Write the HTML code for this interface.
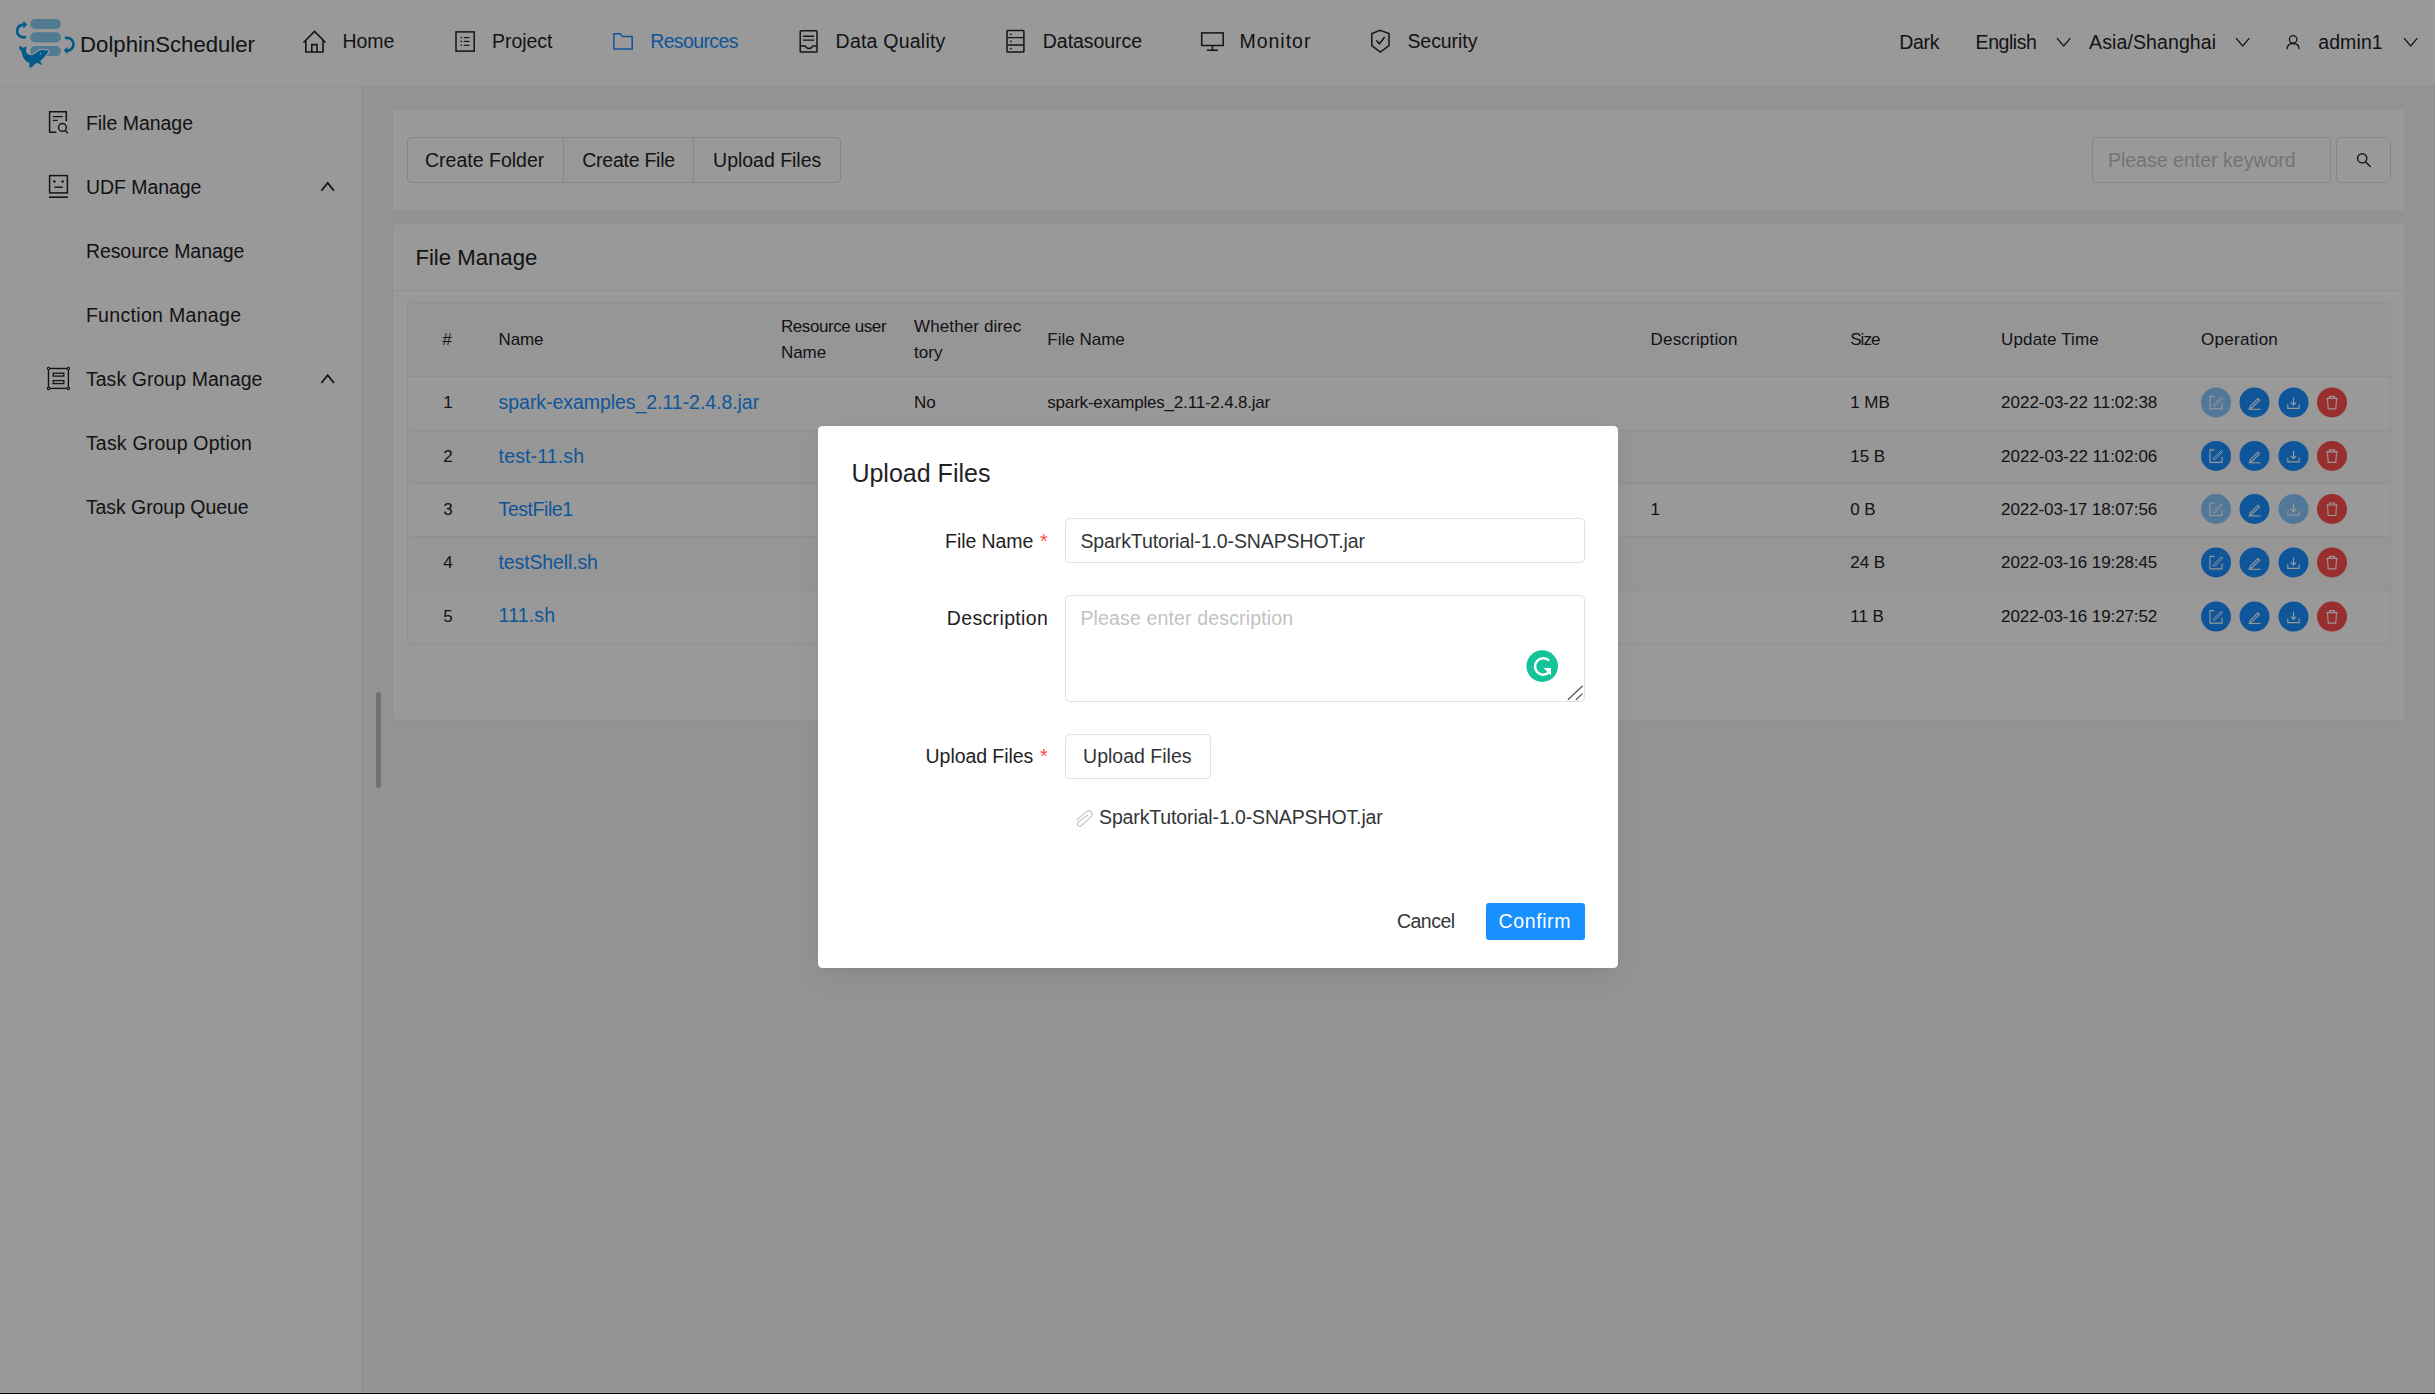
<!DOCTYPE html>
<html><head><meta charset="utf-8"><title>DolphinScheduler</title>
<style>
html,body{margin:0;padding:0;}
body{width:2435px;height:1394px;overflow:hidden;position:relative;background:#f6f6f9;font-family:'Liberation Sans', sans-serif;}
.t{position:absolute;white-space:nowrap;}
.b{position:absolute;box-sizing:border-box;}
svg.b{overflow:visible;}
</style></head><body>

<div class="b" style="left:0.00px;top:0.00px;width:2435.00px;height:86.00px;background:#fff;"></div>
<div class="b" style="left:0.00px;top:86.00px;width:2435.00px;height:1.30px;background:#efeff5;"></div>
<div class="b" style="left:0.00px;top:87.00px;width:361.00px;height:1307.00px;background:#fff;"></div>
<div class="b" style="left:361.00px;top:87.00px;width:1.50px;height:1307.00px;background:#efeff5;"></div>
<svg class="b" style="left:10px;top:12px;" width="70" height="60" viewBox="10 12 70 60">
<rect x="30.2" y="19" width="30.8" height="10" rx="5" fill="#85cdf6"/>
<rect x="30.2" y="32.3" width="30.8" height="10.2" rx="5" fill="#85cdf6"/>
<rect x="30.2" y="46" width="30.8" height="10.1" rx="5" fill="#85cdf6"/>
<path d="M25 37.2 A6.4 6.4 0 1 1 23.8 24.6" fill="none" stroke="#0098e6" stroke-width="2.7" stroke-linecap="round"/>
<path d="M23.3 21 L27.3 24.6 L23.3 28.4 Z" fill="#0098e6"/>
<path d="M66 37.9 A6.4 6.4 0 1 1 66.8 50.6" fill="none" stroke="#0098e6" stroke-width="2.7" stroke-linecap="round"/>
<path d="M67.6 46.8 L63.7 50.6 L67.6 54 Z" fill="#0098e6"/>
<clipPath id="b3"><rect x="30.2" y="46" width="30.8" height="10.1" rx="5"/></clipPath><path d="M19.1 46.1 L23.4 47.7 L26.6 46.2 L26 51 C26.3 53 27.8 54.8 30.1 55.1 C31.3 55.2 32.3 55 33.3 54.7 C35 54 37.5 51.8 39.7 50.6 C41 49.9 42.5 49.8 43.8 50.2 L45.1 50.6 C46 50.4 46.7 50 47.3 50.2 C48 50.4 48.5 50.6 48.4 51 C48.3 52 47.8 52.6 47.3 53.2 C46.5 54.3 44 57.5 42.5 59 C41.6 60 40.6 60.8 39.7 61.4 C40.8 62 41.8 63 41.8 64.8 C40.6 64.6 39.2 63.9 38.2 62.9 C37.2 63 36.3 63.1 35.4 63.2 C34.5 64.9 32.3 67 30.1 67.7 L29.1 67.6 C29.2 66.2 29.5 64.6 29.6 63.4 L28.8 62.7 C27 61.9 25.6 60.9 24.7 59.6 C23.5 58 22.8 56.7 22.5 55.3 C22 53.8 21.6 52.5 21.4 51 C20.6 50.2 19.9 49.6 19.3 48.9 Z" fill="none" stroke="#fff" stroke-width="2.6" clip-path="url(#b3)"/><path d="M19.1 46.1 L23.4 47.7 L26.6 46.2 L26 51 C26.3 53 27.8 54.8 30.1 55.1 C31.3 55.2 32.3 55 33.3 54.7 C35 54 37.5 51.8 39.7 50.6 C41 49.9 42.5 49.8 43.8 50.2 L45.1 50.6 C46 50.4 46.7 50 47.3 50.2 C48 50.4 48.5 50.6 48.4 51 C48.3 52 47.8 52.6 47.3 53.2 C46.5 54.3 44 57.5 42.5 59 C41.6 60 40.6 60.8 39.7 61.4 C40.8 62 41.8 63 41.8 64.8 C40.6 64.6 39.2 63.9 38.2 62.9 C37.2 63 36.3 63.1 35.4 63.2 C34.5 64.9 32.3 67 30.1 67.7 L29.1 67.6 C29.2 66.2 29.5 64.6 29.6 63.4 L28.8 62.7 C27 61.9 25.6 60.9 24.7 59.6 C23.5 58 22.8 56.7 22.5 55.3 C22 53.8 21.6 52.5 21.4 51 C20.6 50.2 19.9 49.6 19.3 48.9 Z" fill="#0098e6"/>
<circle cx="40.5" cy="53.5" r="0.75" fill="#fff"/>
</svg>
<div class="t" style="left:80.10px;top:30.82px;font-size:22.17px;line-height:27px;color:#222;">DolphinScheduler</div>
<svg class="b" style="left:0px;top:0px;" width="2435" height="86" viewBox="0 0 2435 86"><path d="M303.5 42.5 L314.5 31.5 L325.5 42.5 M305.8 40.5 V52 H323 V40.5 M311.8 52 V44.6 H317 V52" fill="none" stroke="#1f2225" stroke-width="1.6" stroke-linejoin="miter"/><rect x="456" y="31.9" width="18.2" height="19.2" fill="none" stroke="#1f2225" stroke-width="1.5"/><circle cx="461.2" cy="37.6" r="0.8" fill="#1f2225"/><path d="M463.8 37.6 H469.5" stroke="#1f2225" stroke-width="1.2"/><circle cx="461.2" cy="41.4" r="0.8" fill="#1f2225"/><path d="M463.8 41.4 H469.5" stroke="#1f2225" stroke-width="1.2"/><circle cx="461.2" cy="45.3" r="0.8" fill="#1f2225"/><path d="M463.8 45.3 H469.5" stroke="#1f2225" stroke-width="1.2"/><path d="M613.9 33.8 H620 L622.5 36.6 H632.2 V48.9 H613.9 Z" fill="none" stroke="#1890ff" stroke-width="1.5"/><rect x="800.2" y="30.7" width="16.8" height="21.3" rx="0.8" fill="none" stroke="#1f2225" stroke-width="1.5"/><path d="M803 36.2 H814 M803 40.1 H814" stroke="#1f2225" stroke-width="1.4"/><path d="M800.2 46 H805 Q809 51 813 46 H817" fill="none" stroke="#1f2225" stroke-width="1.4"/><rect x="1007" y="30.6" width="16.9" height="21.5" rx="0.8" fill="none" stroke="#1f2225" stroke-width="1.5"/><path d="M1007 37.6 H1023.9 M1007 45 H1023.9" stroke="#1f2225" stroke-width="1.4"/><circle cx="1010.8" cy="34.3" r="0.9" fill="#1f2225"/><circle cx="1010.8" cy="41.4" r="0.9" fill="#1f2225"/><circle cx="1010.8" cy="48.6" r="0.9" fill="#1f2225"/><rect x="1201.7" y="32.9" width="21.5" height="12.6" fill="none" stroke="#1f2225" stroke-width="1.5"/><path d="M1212.4 45.5 V50 M1206.9 50.3 H1218" stroke="#1f2225" stroke-width="1.5"/><path d="M1380.3 30.4 L1389 33.6 V45.6 L1380.3 52 L1371.8 45.6 V33.6 Z" fill="none" stroke="#1f2225" stroke-width="1.5" stroke-linejoin="miter"/><path d="M1376.3 40.5 L1379.5 43.8 L1384.6 37" fill="none" stroke="#1f2225" stroke-width="1.5"/><circle cx="2293.1" cy="39.4" r="3.7" fill="none" stroke="#1f2225" stroke-width="1.3"/><path d="M2286.9 49.3 C2287.2 45.5 2289.8 43.5 2293.1 43.5 C2296.4 43.5 2299 45.5 2299.2 49.3" fill="none" stroke="#1f2225" stroke-width="1.3"/><path d="M2057 38.2 L2063.7 46 L2070.4 38.2" fill="none" stroke="#1f2225" stroke-width="1.3"/><path d="M2236 38.2 L2242.7 46 L2249.4 38.2" fill="none" stroke="#1f2225" stroke-width="1.3"/><path d="M2404 38.2 L2410.7 46 L2417.4 38.2" fill="none" stroke="#1f2225" stroke-width="1.3"/></svg>
<div class="t" style="left:342.40px;top:29.74px;font-size:19.5px;line-height:23px;color:#1f2225;letter-spacing:-0.022px;">Home</div>
<div class="t" style="left:492.10px;top:29.74px;font-size:19.5px;line-height:23px;color:#1f2225;letter-spacing:-0.058px;">Project</div>
<div class="t" style="left:650.20px;top:29.74px;font-size:19.5px;line-height:23px;color:#1890ff;letter-spacing:-0.626px;">Resources</div>
<div class="t" style="left:835.60px;top:29.74px;font-size:19.5px;line-height:23px;color:#1f2225;letter-spacing:0.223px;">Data Quality</div>
<div class="t" style="left:1042.80px;top:29.74px;font-size:19.5px;line-height:23px;color:#1f2225;letter-spacing:-0.049px;">Datasource</div>
<div class="t" style="left:1239.40px;top:29.74px;font-size:19.5px;line-height:23px;color:#1f2225;letter-spacing:0.995px;">Monitor</div>
<div class="t" style="left:1407.40px;top:29.74px;font-size:19.5px;line-height:23px;color:#1f2225;letter-spacing:-0.056px;">Security</div>
<div class="t" style="left:1899.30px;top:30.74px;font-size:19.5px;line-height:23px;color:#1f2225;letter-spacing:-0.347px;">Dark</div>
<div class="t" style="left:1975.60px;top:30.74px;font-size:19.5px;line-height:23px;color:#1f2225;letter-spacing:-0.46px;">English</div>
<div class="t" style="left:2089.10px;top:30.74px;font-size:19.5px;line-height:23px;color:#1f2225;letter-spacing:0.102px;">Asia/Shanghai</div>
<div class="t" style="left:2318.20px;top:30.74px;font-size:19.5px;line-height:23px;color:#1f2225;letter-spacing:0.108px;">admin1</div>
<svg class="b" style="left:0px;top:87px;" width="361" height="400" viewBox="0 87 361 400"><path d="M56.3 132.3 H49.6 V111.7 H66.3 V121.3" fill="none" stroke="#1f2225" stroke-width="1.5"/><path d="M52.8 116.6 H62.8 M52.8 120.4 H57.7" stroke="#1f2225" stroke-width="1.3"/><circle cx="62.4" cy="127.4" r="3.9" fill="none" stroke="#1f2225" stroke-width="1.4"/><path d="M65.2 130.3 L67.8 133.2" stroke="#1f2225" stroke-width="1.4"/><rect x="49.6" y="175.6" width="17.8" height="17.3" fill="none" stroke="#1f2225" stroke-width="1.5"/><circle cx="54.4" cy="181.5" r="1.2" fill="#1f2225"/><circle cx="62.6" cy="181.5" r="1.2" fill="#1f2225"/><path d="M54.3 187.2 H62.8" stroke="#1f2225" stroke-width="1.4"/><path d="M49 197.2 H68" stroke="#1f2225" stroke-width="1.6"/><rect x="48.5" y="368.5" width="19.9" height="19.9" fill="none" stroke="#1f2225" stroke-width="1.4"/><circle cx="48.5" cy="368.5" r="1.2" fill="#fff" stroke="#1f2225" stroke-width="1.1"/><circle cx="68.4" cy="368.5" r="1.2" fill="#fff" stroke="#1f2225" stroke-width="1.1"/><circle cx="48.5" cy="388.4" r="1.2" fill="#fff" stroke="#1f2225" stroke-width="1.1"/><circle cx="68.4" cy="388.4" r="1.2" fill="#fff" stroke="#1f2225" stroke-width="1.1"/><rect x="53.2" y="373.2" width="10.6" height="2.9" fill="none" stroke="#1f2225" stroke-width="1.3"/><rect x="53.2" y="380.6" width="10.6" height="3" fill="none" stroke="#1f2225" stroke-width="1.3"/><path d="M321.4 190.7 L327.7 182.89999999999998 L334 190.7" fill="none" stroke="#1f2225" stroke-width="1.8"/><path d="M321.4 383 L327.7 375.2 L334 383" fill="none" stroke="#1f2225" stroke-width="1.8"/></svg>
<div class="t" style="left:85.90px;top:111.74px;font-size:19.5px;line-height:23px;color:#1f2225;letter-spacing:-0.015px;">File Manage</div>
<div class="t" style="left:85.90px;top:175.74px;font-size:19.5px;line-height:23px;color:#1f2225;letter-spacing:-0.047px;">UDF Manage</div>
<div class="t" style="left:85.90px;top:239.74px;font-size:19.5px;line-height:23px;color:#1f2225;letter-spacing:-0.065px;">Resource Manage</div>
<div class="t" style="left:85.90px;top:303.74px;font-size:19.5px;line-height:23px;color:#1f2225;letter-spacing:0.319px;">Function Manage</div>
<div class="t" style="left:85.90px;top:367.74px;font-size:19.5px;line-height:23px;color:#1f2225;letter-spacing:0.056px;">Task Group Manage</div>
<div class="t" style="left:85.90px;top:431.74px;font-size:19.5px;line-height:23px;color:#1f2225;letter-spacing:0.211px;">Task Group Option</div>
<div class="t" style="left:85.90px;top:495.74px;font-size:19.5px;line-height:23px;color:#1f2225;letter-spacing:-0.067px;">Task Group Queue</div>
<div class="b" style="left:375.80px;top:692.00px;width:5.20px;height:96.00px;background:#bdbdbd;border-radius:3px;"></div>
<div class="b" style="left:392.00px;top:108.00px;width:2014.00px;height:104.00px;background:#fff;border:1px solid #efeff5;border-radius:4.5px;"></div>
<div class="b" style="left:407.30px;top:137.00px;width:433.30px;height:46.00px;border:1px solid #e0e0e6;border-radius:4.5px;background:#fff;"></div>
<div class="b" style="left:563.00px;top:137.00px;width:1.20px;height:46.00px;background:#e0e0e6;"></div>
<div class="b" style="left:693.00px;top:137.00px;width:1.20px;height:46.00px;background:#e0e0e6;"></div>
<div class="t" style="left:425.00px;top:148.74px;font-size:19.5px;line-height:23px;color:#1f2225;letter-spacing:0.005px;">Create Folder</div>
<div class="t" style="left:582.30px;top:148.74px;font-size:19.5px;line-height:23px;color:#1f2225;letter-spacing:-0.256px;">Create File</div>
<div class="t" style="left:713.10px;top:148.74px;font-size:19.5px;line-height:23px;color:#1f2225;letter-spacing:-0.02px;">Upload Files</div>
<div class="b" style="left:2092.40px;top:137.00px;width:238.20px;height:46.00px;border:1px solid #e0e0e6;border-radius:4.5px;background:#fff;"></div>
<div class="t" style="left:2107.90px;top:148.74px;font-size:19.5px;line-height:23px;color:#c2c2c2;letter-spacing:0.016px;">Please enter keyword</div>
<div class="b" style="left:2336.20px;top:137.00px;width:55.30px;height:46.00px;border:1px solid #e0e0e6;border-radius:4.5px;background:#fff;"></div>
<svg class="b" style="left:2350px;top:145px;" width="30" height="30" viewBox="2350 145 30 30"><circle cx="2362.2" cy="158.3" r="4.6" fill="none" stroke="#1f2225" stroke-width="1.4"/><path d="M2365.6 161.7 L2370.3 166.4" stroke="#1f2225" stroke-width="1.4" stroke-linecap="round"/></svg>
<div class="b" style="left:392.00px;top:223.00px;width:2014.00px;height:498.00px;background:#fff;border:1px solid #efeff5;border-radius:4.5px;"></div>
<div class="b" style="left:393.00px;top:290.00px;width:2012.00px;height:1.40px;background:#efeff5;"></div>
<div class="t" style="left:415.40px;top:243.82px;font-size:22.16px;line-height:27px;color:#1f2225;">File Manage</div>
<div class="b" style="left:407.00px;top:302.00px;width:1984.00px;height:343.00px;border:1px solid #efeff5;border-radius:4.5px;background:#fff;overflow:hidden;"></div>
<div class="b" style="left:408.50px;top:303.30px;width:1981.10px;height:73.00px;background:#fafafc;"></div>
<div class="b" style="left:408.50px;top:376.30px;width:1981.10px;height:1.00px;background:#efeff5;"></div>
<div class="b" style="left:408.50px;top:430.30px;width:1981.10px;height:1.00px;background:#efeff5;"></div>
<div class="b" style="left:408.50px;top:483.40px;width:1981.10px;height:1.00px;background:#efeff5;"></div>
<div class="b" style="left:408.50px;top:536.30px;width:1981.10px;height:1.00px;background:#efeff5;"></div>
<div class="b" style="left:408.50px;top:590.30px;width:1981.10px;height:1.00px;background:#efeff5;"></div>
<div class="b" style="left:408.50px;top:431.30px;width:1981.10px;height:52.10px;background:#fafafc;"></div>
<div class="b" style="left:408.50px;top:537.30px;width:1981.10px;height:53.00px;background:#fafafc;"></div>
<div class="t" style="left:442.20px;top:330.11px;font-size:17px;line-height:20px;color:#1f2225;">#</div>
<div class="t" style="left:498.60px;top:330.11px;font-size:17px;line-height:20px;color:#1f2225;letter-spacing:-0.163px;">Name</div>
<div class="t" style="left:1047.30px;top:330.11px;font-size:17px;line-height:20px;color:#1f2225;">File Name</div>
<div class="t" style="left:1650.60px;top:330.11px;font-size:17px;line-height:20px;color:#1f2225;letter-spacing:0.18px;">Description</div>
<div class="t" style="left:1850.20px;top:330.11px;font-size:17px;line-height:20px;color:#1f2225;letter-spacing:-0.955px;">Size</div>
<div class="t" style="left:2001.10px;top:330.11px;font-size:17px;line-height:20px;color:#1f2225;letter-spacing:0.121px;">Update Time</div>
<div class="t" style="left:2201.10px;top:330.11px;font-size:17px;line-height:20px;color:#1f2225;letter-spacing:0.259px;">Operation</div>
<div class="t" style="left:780.90px;top:317.11px;font-size:17px;line-height:20px;color:#1f2225;letter-spacing:-0.407px;">Resource user</div>
<div class="t" style="left:780.90px;top:343.11px;font-size:17px;line-height:20px;color:#1f2225;">Name</div>
<div class="t" style="left:914.10px;top:317.11px;font-size:17px;line-height:20px;color:#1f2225;letter-spacing:0.106px;">Whether direc</div>
<div class="t" style="left:914.10px;top:343.11px;font-size:17px;line-height:20px;color:#1f2225;">tory</div>
<div class="t" style="left:443.20px;top:393.41px;font-size:17px;line-height:20px;color:#1f2225;">1</div>
<div class="t" style="left:498.60px;top:391.04px;font-size:19.5px;line-height:23px;color:#1890ff;letter-spacing:-0.049px;">spark-examples_2.11-2.4.8.jar</div>
<div class="t" style="left:914.10px;top:393.41px;font-size:17px;line-height:20px;color:#1f2225;">No</div>
<div class="t" style="left:1047.30px;top:393.41px;font-size:17px;line-height:20px;color:#1f2225;letter-spacing:-0.193px;">spark-examples_2.11-2.4.8.jar</div>
<div class="t" style="left:1850.20px;top:393.41px;font-size:17px;line-height:20px;color:#1f2225;">1 MB</div>
<div class="t" style="left:2001.10px;top:393.41px;font-size:17px;line-height:20px;color:#1f2225;letter-spacing:-0.021px;">2022-03-22 11:02:38</div>
<svg class="b" style="left:2190px;top:370px;" width="170" height="270" viewBox="2190 370 170 270"><g opacity="0.5"><circle cx="2216" cy="402.40000000000003" r="15" fill="#1890ff"/><path d="M2214.5 396.40000000000003 H2210 V408.90000000000003 H2222 V403.40000000000003" fill="none" stroke="#fff" stroke-width="1.1"/><path d="M2213 405.20000000000005 L2221.3 396.90000000000003 L2222.6 398.20000000000005 L2214.3 406.50000000000006 Z" fill="none" stroke="#fff" stroke-width="1"/></g><g opacity="1"><circle cx="2254.5" cy="402.40000000000003" r="15" fill="#1890ff"/><path d="M2250.2 406.40000000000003 L2257.9 398.6 L2259.5 400.20000000000005 L2251.8 407.90000000000003 L2249.7 408.3 Z" fill="none" stroke="#fff" stroke-width="1.1"/><path d="M2248.5 409.3 H2260.5" stroke="#fff" stroke-width="1.1"/></g><g opacity="1"><circle cx="2293.5" cy="402.40000000000003" r="15" fill="#1890ff"/><path d="M2293.5 397.40000000000003 V405.00000000000006 M2290.9 402.40000000000003 L2293.5 405.20000000000005 L2296.1 402.40000000000003" fill="none" stroke="#fff" stroke-width="1.2"/><path d="M2287.8 404.20000000000005 V408.40000000000003 H2299.2 V404.20000000000005" fill="none" stroke="#fff" stroke-width="1.1"/></g><g opacity="1"><circle cx="2332" cy="402.40000000000003" r="15" fill="#ff4d4f"/><path d="M2326.2 398.40000000000003 H2337.8 M2329.5 398.40000000000003 V396.40000000000003 H2334.5 V398.40000000000003 M2327.5 398.40000000000003 L2328.2 408.90000000000003 H2335.8 L2336.5 398.40000000000003" fill="none" stroke="#fff" stroke-width="1.1"/></g></svg>
<div class="t" style="left:443.20px;top:446.91px;font-size:17px;line-height:20px;color:#1f2225;">2</div>
<div class="t" style="left:498.60px;top:444.54px;font-size:19.5px;line-height:23px;color:#1890ff;letter-spacing:0.14px;">test-11.sh</div>
<div class="t" style="left:1850.20px;top:446.91px;font-size:17px;line-height:20px;color:#1f2225;">15 B</div>
<div class="t" style="left:2001.10px;top:446.91px;font-size:17px;line-height:20px;color:#1f2225;letter-spacing:-0.021px;">2022-03-22 11:02:06</div>
<svg class="b" style="left:2190px;top:370px;" width="170" height="270" viewBox="2190 370 170 270"><g opacity="1"><circle cx="2216" cy="455.90000000000003" r="15" fill="#1890ff"/><path d="M2214.5 449.90000000000003 H2210 V462.40000000000003 H2222 V456.90000000000003" fill="none" stroke="#fff" stroke-width="1.1"/><path d="M2213 458.70000000000005 L2221.3 450.40000000000003 L2222.6 451.70000000000005 L2214.3 460.00000000000006 Z" fill="none" stroke="#fff" stroke-width="1"/></g><g opacity="1"><circle cx="2254.5" cy="455.90000000000003" r="15" fill="#1890ff"/><path d="M2250.2 459.90000000000003 L2257.9 452.1 L2259.5 453.70000000000005 L2251.8 461.40000000000003 L2249.7 461.8 Z" fill="none" stroke="#fff" stroke-width="1.1"/><path d="M2248.5 462.8 H2260.5" stroke="#fff" stroke-width="1.1"/></g><g opacity="1"><circle cx="2293.5" cy="455.90000000000003" r="15" fill="#1890ff"/><path d="M2293.5 450.90000000000003 V458.50000000000006 M2290.9 455.90000000000003 L2293.5 458.70000000000005 L2296.1 455.90000000000003" fill="none" stroke="#fff" stroke-width="1.2"/><path d="M2287.8 457.70000000000005 V461.90000000000003 H2299.2 V457.70000000000005" fill="none" stroke="#fff" stroke-width="1.1"/></g><g opacity="1"><circle cx="2332" cy="455.90000000000003" r="15" fill="#ff4d4f"/><path d="M2326.2 451.90000000000003 H2337.8 M2329.5 451.90000000000003 V449.90000000000003 H2334.5 V451.90000000000003 M2327.5 451.90000000000003 L2328.2 462.40000000000003 H2335.8 L2336.5 451.90000000000003" fill="none" stroke="#fff" stroke-width="1.1"/></g></svg>
<div class="t" style="left:443.20px;top:500.01px;font-size:17px;line-height:20px;color:#1f2225;">3</div>
<div class="t" style="left:498.60px;top:497.64px;font-size:19.5px;line-height:23px;color:#1890ff;letter-spacing:-0.45px;">TestFile1</div>
<div class="t" style="left:1650.60px;top:500.01px;font-size:17px;line-height:20px;color:#1f2225;">1</div>
<div class="t" style="left:1850.20px;top:500.01px;font-size:17px;line-height:20px;color:#1f2225;">0 B</div>
<div class="t" style="left:2001.10px;top:500.01px;font-size:17px;line-height:20px;color:#1f2225;letter-spacing:-0.091px;">2022-03-17 18:07:56</div>
<svg class="b" style="left:2190px;top:370px;" width="170" height="270" viewBox="2190 370 170 270"><g opacity="0.5"><circle cx="2216" cy="509.0" r="15" fill="#1890ff"/><path d="M2214.5 503.0 H2210 V515.5 H2222 V510.0" fill="none" stroke="#fff" stroke-width="1.1"/><path d="M2213 511.8 L2221.3 503.5 L2222.6 504.8 L2214.3 513.1 Z" fill="none" stroke="#fff" stroke-width="1"/></g><g opacity="1"><circle cx="2254.5" cy="509.0" r="15" fill="#1890ff"/><path d="M2250.2 513.0 L2257.9 505.2 L2259.5 506.8 L2251.8 514.5 L2249.7 514.9 Z" fill="none" stroke="#fff" stroke-width="1.1"/><path d="M2248.5 515.9 H2260.5" stroke="#fff" stroke-width="1.1"/></g><g opacity="0.5"><circle cx="2293.5" cy="509.0" r="15" fill="#1890ff"/><path d="M2293.5 504.0 V511.6 M2290.9 509.0 L2293.5 511.8 L2296.1 509.0" fill="none" stroke="#fff" stroke-width="1.2"/><path d="M2287.8 510.8 V515.0 H2299.2 V510.8" fill="none" stroke="#fff" stroke-width="1.1"/></g><g opacity="1"><circle cx="2332" cy="509.0" r="15" fill="#ff4d4f"/><path d="M2326.2 505.0 H2337.8 M2329.5 505.0 V503.0 H2334.5 V505.0 M2327.5 505.0 L2328.2 515.5 H2335.8 L2336.5 505.0" fill="none" stroke="#fff" stroke-width="1.1"/></g></svg>
<div class="t" style="left:443.20px;top:553.41px;font-size:17px;line-height:20px;color:#1f2225;">4</div>
<div class="t" style="left:498.60px;top:551.04px;font-size:19.5px;line-height:23px;color:#1890ff;letter-spacing:-0.138px;">testShell.sh</div>
<div class="t" style="left:1850.20px;top:553.41px;font-size:17px;line-height:20px;color:#1f2225;">24 B</div>
<div class="t" style="left:2001.10px;top:553.41px;font-size:17px;line-height:20px;color:#1f2225;letter-spacing:-0.091px;">2022-03-16 19:28:45</div>
<svg class="b" style="left:2190px;top:370px;" width="170" height="270" viewBox="2190 370 170 270"><g opacity="1"><circle cx="2216" cy="562.4" r="15" fill="#1890ff"/><path d="M2214.5 556.4 H2210 V568.9 H2222 V563.4" fill="none" stroke="#fff" stroke-width="1.1"/><path d="M2213 565.1999999999999 L2221.3 556.9 L2222.6 558.1999999999999 L2214.3 566.5 Z" fill="none" stroke="#fff" stroke-width="1"/></g><g opacity="1"><circle cx="2254.5" cy="562.4" r="15" fill="#1890ff"/><path d="M2250.2 566.4 L2257.9 558.6 L2259.5 560.1999999999999 L2251.8 567.9 L2249.7 568.3 Z" fill="none" stroke="#fff" stroke-width="1.1"/><path d="M2248.5 569.3 H2260.5" stroke="#fff" stroke-width="1.1"/></g><g opacity="1"><circle cx="2293.5" cy="562.4" r="15" fill="#1890ff"/><path d="M2293.5 557.4 V565.0 M2290.9 562.4 L2293.5 565.1999999999999 L2296.1 562.4" fill="none" stroke="#fff" stroke-width="1.2"/><path d="M2287.8 564.1999999999999 V568.4 H2299.2 V564.1999999999999" fill="none" stroke="#fff" stroke-width="1.1"/></g><g opacity="1"><circle cx="2332" cy="562.4" r="15" fill="#ff4d4f"/><path d="M2326.2 558.4 H2337.8 M2329.5 558.4 V556.4 H2334.5 V558.4 M2327.5 558.4 L2328.2 568.9 H2335.8 L2336.5 558.4" fill="none" stroke="#fff" stroke-width="1.1"/></g></svg>
<div class="t" style="left:443.20px;top:606.61px;font-size:17px;line-height:20px;color:#1f2225;">5</div>
<div class="t" style="left:498.60px;top:604.24px;font-size:19.5px;line-height:23px;color:#1890ff;letter-spacing:0.166px;">111.sh</div>
<div class="t" style="left:1850.20px;top:606.61px;font-size:17px;line-height:20px;color:#1f2225;">11 B</div>
<div class="t" style="left:2001.10px;top:606.61px;font-size:17px;line-height:20px;color:#1f2225;letter-spacing:-0.091px;">2022-03-16 19:27:52</div>
<svg class="b" style="left:2190px;top:370px;" width="170" height="270" viewBox="2190 370 170 270"><g opacity="1"><circle cx="2216" cy="616.6" r="15" fill="#1890ff"/><path d="M2214.5 610.6 H2210 V623.1 H2222 V617.6" fill="none" stroke="#fff" stroke-width="1.1"/><path d="M2213 619.4 L2221.3 611.1 L2222.6 612.4 L2214.3 620.7 Z" fill="none" stroke="#fff" stroke-width="1"/></g><g opacity="1"><circle cx="2254.5" cy="616.6" r="15" fill="#1890ff"/><path d="M2250.2 620.6 L2257.9 612.8000000000001 L2259.5 614.4 L2251.8 622.1 L2249.7 622.5 Z" fill="none" stroke="#fff" stroke-width="1.1"/><path d="M2248.5 623.5 H2260.5" stroke="#fff" stroke-width="1.1"/></g><g opacity="1"><circle cx="2293.5" cy="616.6" r="15" fill="#1890ff"/><path d="M2293.5 611.6 V619.2 M2290.9 616.6 L2293.5 619.4 L2296.1 616.6" fill="none" stroke="#fff" stroke-width="1.2"/><path d="M2287.8 618.4 V622.6 H2299.2 V618.4" fill="none" stroke="#fff" stroke-width="1.1"/></g><g opacity="1"><circle cx="2332" cy="616.6" r="15" fill="#ff4d4f"/><path d="M2326.2 612.6 H2337.8 M2329.5 612.6 V610.6 H2334.5 V612.6 M2327.5 612.6 L2328.2 623.1 H2335.8 L2336.5 612.6" fill="none" stroke="#fff" stroke-width="1.1"/></g></svg>
<div class="b" style="left:0.00px;top:0.00px;width:2435.00px;height:1394.00px;background:rgba(0,0,0,0.4);"></div>
<div class="b" style="left:0.00px;top:1392.00px;width:2435.00px;height:1.00px;background:rgba(255,255,255,0.07);"></div>
<div class="b" style="left:0.00px;top:1393.00px;width:2435.00px;height:1.00px;background:#000;"></div>
<div class="b" style="left:818.00px;top:426.00px;width:799.50px;height:541.70px;background:#fff;border-radius:4.5px;box-shadow:0 6px 16px -9px rgba(0,0,0,.08),0 9px 28px 0 rgba(0,0,0,.05);"></div>
<div class="t" style="left:851.40px;top:458.33px;font-size:25.02px;line-height:30px;color:#1f2225;">Upload Files</div>
<div class="t" style="left:945.10px;top:529.74px;font-size:19.5px;line-height:23px;color:#1f2225;letter-spacing:-0.078px;">File Name</div>
<div class="t" style="right:1387.42px;top:529.74px;font-size:19.5px;line-height:23px;color:#ff4d4f;">*</div>
<div class="b" style="left:1065.20px;top:518.30px;width:519.40px;height:45.10px;border:1px solid #e0e0e6;border-radius:4.5px;"></div>
<div class="t" style="left:1080.40px;top:529.74px;font-size:19.5px;line-height:23px;color:#333639;letter-spacing:-0.101px;">SparkTutorial-1.0-SNAPSHOT.jar</div>
<div class="t" style="left:946.80px;top:606.74px;font-size:19.5px;line-height:23px;color:#1f2225;letter-spacing:0.35px;">Description</div>
<div class="b" style="left:1065.20px;top:595.00px;width:519.40px;height:107.10px;border:1px solid #e0e0e6;border-radius:4.5px;"></div>
<div class="t" style="left:1080.40px;top:606.74px;font-size:19.5px;line-height:23px;color:#c2c2c2;letter-spacing:0.155px;">Please enter description</div>
<svg class="b" style="left:1520px;top:640px;" width="70" height="65" viewBox="1520 640 70 65"><circle cx="1542.2" cy="666.1" r="15.8" fill="#15c39a"/><path d="M1549.2 660.6 A8.3 8.3 0 1 0 1549.3 672.2" fill="none" stroke="#fff" stroke-width="2.5"/><path d="M1543.6 668 H1551 V675.6 Z" fill="#fff"/><path d="M1568.2 699.5 L1582.2 686.2 M1576.2 699.5 L1582.2 693.9" stroke="#555" stroke-width="1.2" stroke-linecap="round"/></svg>
<div class="t" style="left:925.60px;top:744.74px;font-size:19.5px;line-height:23px;color:#1f2225;letter-spacing:-0.065px;">Upload Files</div>
<div class="t" style="right:1387.42px;top:744.74px;font-size:19.5px;line-height:23px;color:#ff4d4f;">*</div>
<div class="b" style="left:1065.20px;top:734.30px;width:145.50px;height:45.10px;border:1px solid #e0e0e6;border-radius:4.5px;"></div>
<div class="t" style="left:1083.10px;top:744.74px;font-size:19.5px;line-height:23px;color:#333639;letter-spacing:0.007px;">Upload Files</div>
<svg class="b" style="left:1070px;top:800px;" width="40" height="35" viewBox="1070 800 40 35"><path d="M1077.3 819.6 L1086 811.8 C1088.5 809.8 1091.5 810.8 1092 813.5 C1092.3 815 1091.5 816.3 1090.6 817.2 L1081.4 825.5 C1079.8 826.8 1077.6 826.3 1077.4 824.3 C1077.3 823.3 1077.8 822.5 1078.5 821.9 L1087.5 815.3" fill="none" stroke="#c2c2c2" stroke-width="1.1" stroke-linecap="round"/></svg>
<div class="t" style="left:1099.00px;top:805.74px;font-size:19.5px;line-height:23px;color:#333639;letter-spacing:-0.129px;">SparkTutorial-1.0-SNAPSHOT.jar</div>
<div class="t" style="left:1396.90px;top:909.74px;font-size:19.5px;line-height:23px;color:#333639;letter-spacing:-0.489px;">Cancel</div>
<div class="b" style="left:1486.00px;top:903.00px;width:99.00px;height:37.00px;background:#1890ff;border-radius:3px;"></div>
<div class="t" style="left:1498.60px;top:909.74px;font-size:19.5px;line-height:23px;color:#fff;letter-spacing:0.592px;">Confirm</div>
</body></html>
